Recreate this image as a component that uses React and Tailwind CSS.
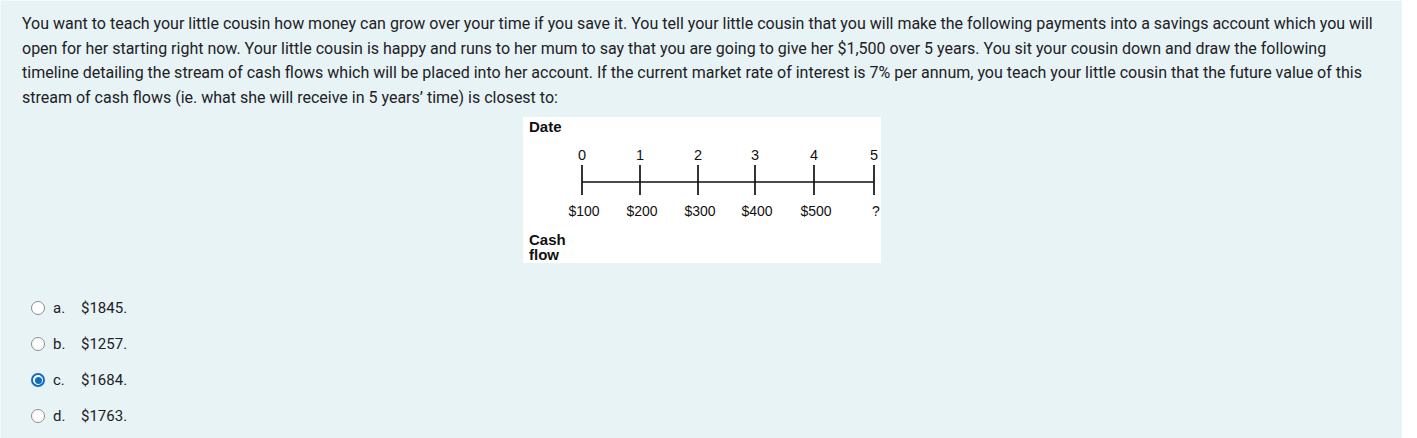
import React from "react"

const ticks = [
  { x: 59, n: "0", v: "$100" },
  { x: 117, n: "1", v: "$200" },
  { x: 175, n: "2", v: "$300" },
  { x: 232, n: "3", v: "$400" },
  { x: 291, n: "4", v: "$500" },
  { x: 351, n: "5", v: "?" },
]

const Timeline = () => (
  <svg width="358" height="146" viewBox="0 0 358 146" className="block bg-white">
    <g fontFamily="'Liberation Sans', Arial, sans-serif" fill="#111">
      <text x="6" y="15" fontSize="15" fontWeight="bold">Date</text>
      {ticks.map((t) => (
        <g key={t.n}>
          <text x={t.x} y="43" fontSize="14.5" textAnchor="middle">{t.n}</text>
          <line x1={t.x} y1="48" x2={t.x} y2="78" stroke="#111" strokeWidth="1.7" />
          <text x={t.x + 2} y="99" fontSize="14" textAnchor="middle">{t.v}</text>
        </g>
      ))}
      <line x1="59" y1="65" x2="351" y2="65" stroke="#111" strokeWidth="1.7" />
      <text x="6" y="128" fontSize="15" fontWeight="bold">Cash</text>
      <text x="6" y="143" fontSize="15" fontWeight="bold">flow</text>
    </g>
  </svg>
)

const options = [
  { key: "a.", value: "$1845.", checked: false },
  { key: "b.", value: "$1257.", checked: false },
  { key: "c.", value: "$1684.", checked: true },
  { key: "d.", value: "$1763.", checked: false },
]

export default function App() {
  return (
    <div className="w-[1417px] h-[438px] bg-white" style={{ fontFamily: "Roboto, 'Liberation Sans', sans-serif" }}>
      <div className="w-[1402px] h-[438px] bg-[#e7f3f5] border-t border-l border-[#f4f9fa] text-[#1d2125]">
        {/* question text */}
        <div className="pl-[21px] pr-[18px] pt-[11px] text-[16px] leading-[24.5px]">
          You want to teach your little cousin how money can grow over your time if you save it. You tell your little cousin that you will make the following payments into a savings account which you will open for her starting right now. Your little cousin is happy and runs to her mum to say that you are going to give her $1,500 over 5 years. You sit your cousin down and draw the following timeline detailing the stream of cash flows which will be placed into her account. If the current market rate of interest is 7% per annum, you teach your little cousin that the future value of this stream of cash flows (ie. what she will receive in 5 years’ time) is closest to:
        </div>

        <div className="flex justify-center mt-[7px]">
          <Timeline />
        </div>

        {/* answers */}
        <div className="mt-[27px] pl-[30px] flex flex-col">
          {options.map((o) => (
            <div key={o.key} className="h-[36px] flex items-center text-[15px]">
              {o.checked ? (
                <span className="w-[14px] h-[14px] rounded-full border-2 border-[#0f6cbf] bg-white flex items-center justify-center">
                  <span className="w-[7px] h-[7px] rounded-full bg-[#0f6cbf]" />
                </span>
              ) : (
                <span className="w-[14px] h-[14px] rounded-full border border-[#8a8d90] bg-white" />
              )}
              <span className="ml-[8px] w-[28px]">{o.key}</span>
              <span>{o.value}</span>
            </div>
          ))}
        </div>
      </div>
    </div>
  )
}
